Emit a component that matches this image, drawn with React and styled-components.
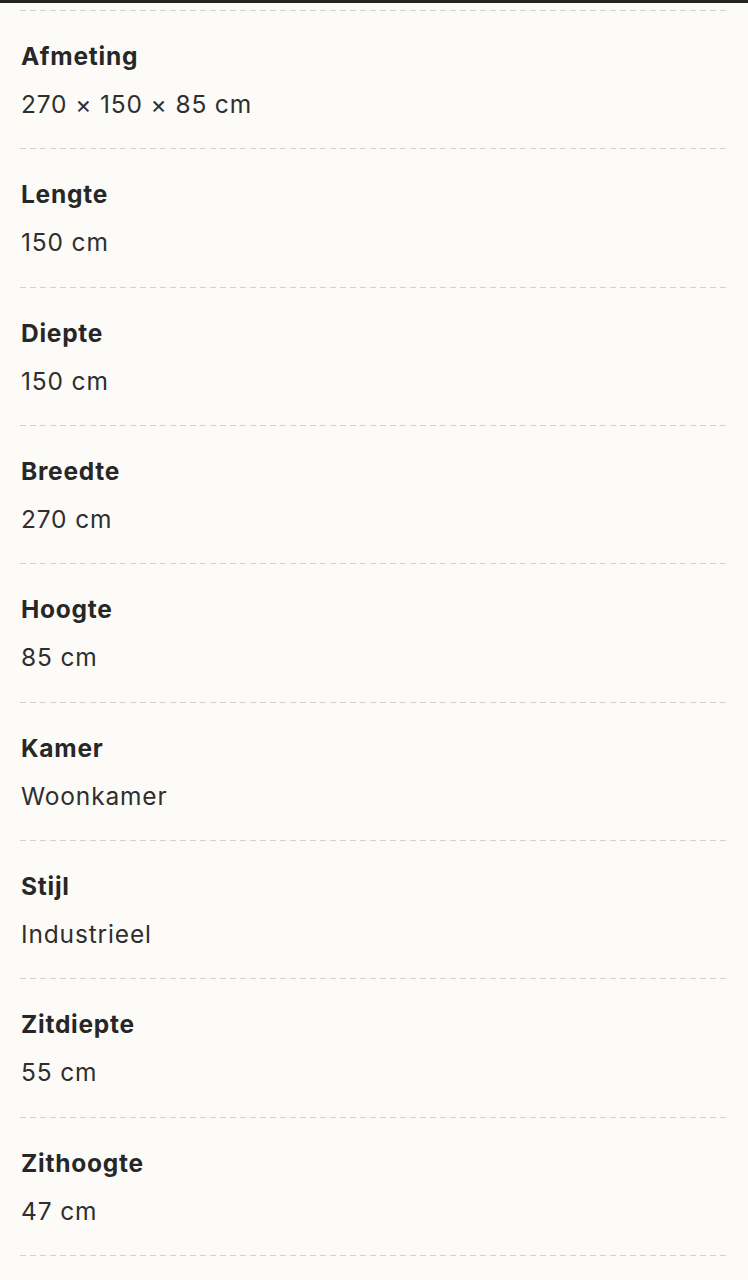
import React from "react";
import styled, { createGlobalStyle } from "styled-components";

const Global = createGlobalStyle`
  html, body { margin: 0; padding: 0; background: #fcfbf8; }
  body { font-family: Inter, "Noto Sans", "Liberation Sans", sans-serif; color: #2b2b2b; -webkit-font-smoothing: antialiased; }
`;

const Page = styled.div`
  min-height: 1280px;
  background: #fcfbf8;
  border-top: 3px solid #232323;
  box-sizing: border-box;
  padding: 7px 21px 0 20px;
`;

const List = styled.dl`
  margin: 0;
  padding: 0;
  display: flex;
  flex-direction: column;
`;

const Divider = styled.div`
  height: 1px;
  background-image: linear-gradient(to right, #d2d1cd 0 6px, transparent 6px 10px);
  background-size: 10px 1px;
  background-repeat: repeat-x;
`;

const Row = styled.div`
  display: flex;
  flex-direction: column;
  gap: 16px;
  padding: 29px 0 28.33px 1px;
`;

const Label = styled.dt`
  margin: 0;
  font-size: 24.5px;
  line-height: 32px;
  font-weight: 700;
  color: #272727;
  letter-spacing: 0.75px;
`;

const Value = styled.dd`
  margin: 0;
  font-size: 24.5px;
  line-height: 32px;
  font-weight: 400;
  color: #2f2f2f;
  letter-spacing: 0.85px;
`;

const specs = [
  ["Afmeting", "270 × 150 × 85 cm"],
  ["Lengte", "150 cm"],
  ["Diepte", "150 cm"],
  ["Breedte", "270 cm"],
  ["Hoogte", "85 cm"],
  ["Kamer", "Woonkamer"],
  ["Stijl", "Industrieel"],
  ["Zitdiepte", "55 cm"],
  ["Zithoogte", "47 cm"],
];

export default function App() {
  return (
    <>
      <Global />
      <Page>
        <List>
          <Divider />
          {specs.map(([k, v]) => (
            <React.Fragment key={k}>
              <Row>
                <Label>{k}</Label>
                <Value>{v}</Value>
              </Row>
              <Divider />
            </React.Fragment>
          ))}
        </List>
      </Page>
    </>
  );
}
